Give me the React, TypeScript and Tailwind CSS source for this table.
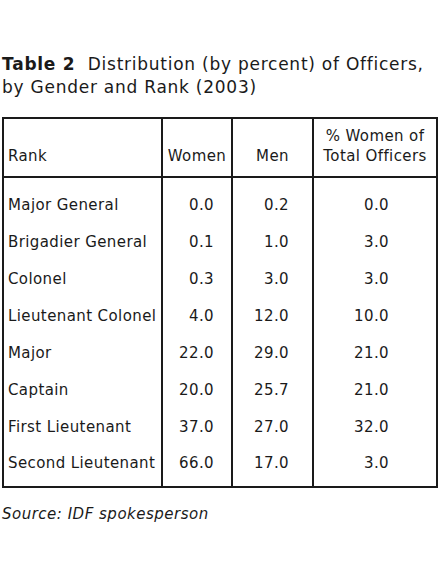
const rows: [string, string, string, string][] = [
  ["Major General", "0.0", "0.2", "0.0"],
  ["Brigadier General", "0.1", "1.0", "3.0"],
  ["Colonel", "0.3", "3.0", "3.0"],
  ["Lieutenant Colonel", "4.0", "12.0", "10.0"],
  ["Major", "22.0", "29.0", "21.0"],
  ["Captain", "20.0", "25.7", "21.0"],
  ["First Lieutenant", "37.0", "27.0", "32.0"],
  ["Second Lieutenant", "66.0", "17.0", "3.0"],
];

export default function App() {
  return (
    <div className="w-[440px] h-[578px] bg-white text-[#1a1a1a] font-['DejaVu_Sans',sans-serif] pt-[53px] pl-[2px]">
      <h2 className="text-[17px] leading-[23px] font-normal tracking-[0.75px]">
        <span className="font-bold">Table 2</span>
        {"\u00a0\u00a0"}Distribution (by percent) of Officers,
        <br />
        by Gender and Rank (2003)
      </h2>

      <table className="mt-[18px] w-[436px] border-collapse border-2 border-[#1a1a1a] text-[15px] tracking-[0.4px]">
        <thead>
          <tr className="h-[59px] align-bottom">
            <th className="w-[159px] border-2 border-[#1a1a1a] text-left font-normal pl-[4px] pb-[10px] leading-[20px]">Rank</th>
            <th className="w-[70px] border-2 border-[#1a1a1a] text-center font-normal pb-[10px] leading-[20px]">Women</th>
            <th className="w-[81px] border-2 border-[#1a1a1a] text-center font-normal pb-[10px] leading-[20px]">Men</th>
            <th className="border-2 border-[#1a1a1a] text-center font-normal pb-[10px] leading-[20px]">
              % Women of
              <br />
              Total Officers
            </th>
          </tr>
        </thead>
        <tbody>
          {rows.map((r, i) => {
            const pad = i === 0 ? "pb-[8px]" : i === rows.length - 1 ? "pt-[8px]" : "";
            return (
              <tr key={r[0]} className={i === 0 ? "h-[46px] align-bottom" : i === rows.length - 1 ? "h-[42px] align-top" : "h-[37px]"}>
                <td className={"border-x-2 border-[#1a1a1a] pl-[4px] leading-[20px] whitespace-nowrap " + pad}>{r[0]}</td>
                <td className={"border-x-2 border-[#1a1a1a] text-right pr-[17px] leading-[20px] " + pad}>{r[1]}</td>
                <td className={"border-x-2 border-[#1a1a1a] text-right pr-[23px] leading-[20px] " + pad}>{r[2]}</td>
                <td className={"border-x-2 border-[#1a1a1a] text-right pr-[47px] leading-[20px] " + pad}>{r[3]}</td>
              </tr>
            );
          })}
        </tbody>
      </table>

      <p className="mt-[16px] text-[15px] italic leading-[20px] tracking-[0.5px]">Source: IDF spokesperson</p>
    </div>
  );
}
